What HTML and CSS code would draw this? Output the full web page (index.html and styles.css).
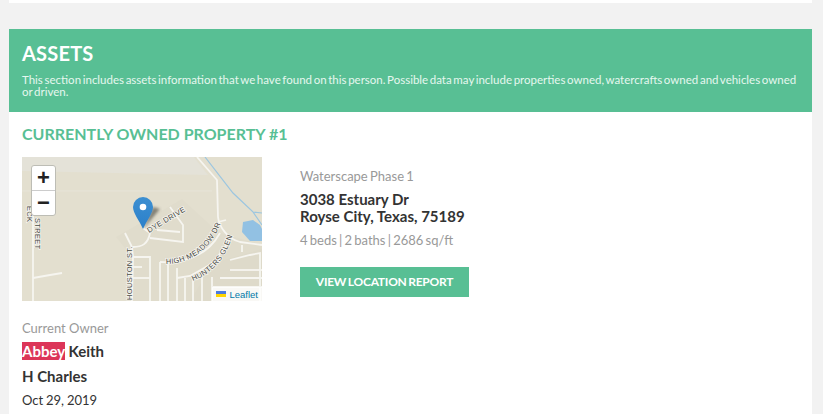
FILE: index.html
```html
<!DOCTYPE html>
<html lang="en">
<head>
  <meta charset="UTF-8">
  <meta name="viewport" content="width=device-width, initial-scale=1.0">
  <title>Assets</title>
  <link rel="stylesheet" href="styles.css">
</head>
<body>
  <div class="top-card"></div>

  <section class="assets">
    <header class="assets-header">
      <h2>ASSETS</h2>
      <p>This section includes assets information that we have found on this person. Possible data may include properties owned, watercrafts owned and vehicles owned or driven.</p>
    </header>

    <div class="assets-body">
      <h3>CURRENTLY OWNED PROPERTY #1</h3>

      <div class="property">
        <div class="map">
          <svg class="map-tiles" viewBox="0 0 240 144" width="240" height="144">
            <defs>
              <filter id="pin-blur"><feGaussianBlur stdDeviation="1.4"/></filter>
              <linearGradient id="pin-fill" x1="0" y1="0" x2="0" y2="1">
                <stop offset="0" stop-color="#3d8fd1"/>
                <stop offset="1" stop-color="#2a7fca"/>
              </linearGradient>
              <path id="meadow-path" d="M144 107C162 107 186 98 198 68"/>
              <path id="hunters-path" d="M171 124C186 118 202 106 210 80"/>
            </defs>
            <rect width="240" height="144" fill="#e3dfcf"/>
            <path d="M0 0H172L186 18L0 14Z" fill="#e4e2d8"/>
            <path d="M94 80L160 42L196 75L240 88V144H110V100Z" fill="#e0dccc"/>
            <path d="M191 106L240 92V144H168Z" fill="#dedaca"/>
            <path d="M0 34H190" stroke="#e7e4d8" stroke-width="1"/>
            <!-- creek and pond -->
            <path d="M183 0L211 36L231 55L240 56M231 55L240 68" fill="none" stroke="#9cc6e0" stroke-width="1.200"/>
            <path d="M221 65L231 63L238 68L240 72V84L228 84L220 75Z" fill="#92c1e3"/>
            <!-- main roads -->
            <g fill="none" stroke="#f6f5f0" stroke-width="1.800">
              <path d="M175 0L195 23L196 60C197 70 206 82 218 85L240 88"/>
              <path d="M196 65L204 63"/>
              <path d="M11 50V144"/>
              <path d="M11 121L28 118L40 116"/>
              <path d="M103 76L110 90L111 100L110 144"/>
              <path d="M111 90C120 90 126 87 128 76L121 71"/>
              <path d="M128 81L161 85V68L148 50"/>
              <path d="M135 73L158 75"/>
              <path d="M111 100H128V144"/>
              <path d="M111 110H120"/>
              <path d="M111 121H128"/>
              <path d="M138 105V144"/>
              <path d="M138 105C165 106 186 98 198 76"/>
              <path d="M146 106V144"/>
              <path d="M155 111V144"/>
              <path d="M163 121V144"/>
              <path d="M171 122V144"/>
              <path d="M180 120V144"/>
              <path d="M155 121L168 119L191 106L208 83"/>
              <path d="M190 120V144"/>
              <path d="M198 121H240"/>
              <path d="M208 113H240"/>
              <path d="M191 130H240"/>
              <path d="M220 88V95"/>
              <path d="M208 103L228 98L238 96V144"/>
            </g>
            <g class="map-labels">
              <text transform="translate(13 61) rotate(90)">STREET</text>
              <text transform="translate(5 49) rotate(90)">ECK</text>
              <text transform="translate(110 151) rotate(-90)">N HOUSTON ST.</text>
              <text transform="translate(127 76) rotate(-31)">DYE DRIVE</text>
              <text><textPath href="#meadow-path">HIGH MEADOW DR.</textPath></text>
              <text><textPath href="#hunters-path">HUNTERS GLEN</textPath></text>
            </g>
            <!-- marker shadow, then pin -->
            <path d="M121 72L131 50L138 52Z" fill="#3f3f38" opacity="0.6" filter="url(#pin-blur)"/>
            <path d="M121 72C117 63 111 56 111 50A10 10 0 0 1 131 50C131 56 125 63 121 72Z" fill="url(#pin-fill)"/>
            <circle cx="121" cy="50" r="3.300" fill="#fff"/>
          </svg>

          <div class="zoom-control">
            <a class="zoom-button">+</a>
            <a class="zoom-button">&minus;</a>
          </div>

          <div class="attribution">
            <svg class="flag" viewBox="0 0 10 6" width="10" height="6"><rect width="10" height="3" fill="#4c7be1"/><rect y="3" width="10" height="3" fill="#ffd500"/></svg>
            <a>Leaflet</a>
          </div>
        </div>

        <div class="property-info">
          <div class="subdivision">Waterscape Phase 1</div>
          <div class="address">3038 Estuary Dr<br>Royse City, Texas, 75189</div>
          <div class="details">4 beds | 2 baths | 2686 sq/ft</div>
          <a class="report-button">VIEW LOCATION REPORT</a>
        </div>
      </div>

      <div class="owner">
        <div class="owner-label">Current Owner</div>
        <div class="owner-name"><mark>Abbey</mark> Keith</div>
        <div class="owner-name">H Charles</div>
        <div class="owner-date">Oct 29, 2019</div>
      </div>
    </div>
  </section>
</body>
</html>
```

FILE: styles.css
```css
html, body {
  height: 414px;
  overflow: hidden;
}

body {
  font-family: Lato, 'Open Sans', sans-serif;
  margin: 0;
  padding: 0 11px 0 9px;
  background-color: #f2f2f2;
  color: #333;
}

.top-card {
  height: 3px;
  background-color: white;
}

.assets {
  margin-top: 26px;
  background-color: white;
}

.assets-header {
  background-color: #58bf94;
  color: white;
  padding: 12px 13px 14px;
  height: 57px;
}

.assets-header h2 {
  margin: 0;
  font-size: 20px;
  line-height: 24px;
  font-weight: bold;
  letter-spacing: 0.2px;
}

.assets-header p {
  margin: 9px 0 0;
  font-size: 11.500px;
  line-height: 12px;
  word-spacing: -1.300px;
  color: #e6f7ef;
}

.assets-body {
  padding: 12px 13px 20px;
}

.assets-body h3 {
  margin: 0;
  font-size: 16px;
  line-height: 20px;
  font-weight: bold;
  color: #58bf94;
}

.property {
  display: flex;
  margin-top: 13px;
}

.map {
  position: relative;
  width: 240px;
  height: 144px;
  overflow: hidden;
  background-color: #e3dfcf;
}

.map-tiles {
  display: block;
}

.map-labels text {
  font-family: 'Liberation Sans', sans-serif;
  font-size: 7.500px;
  fill: #4a4a44;
  stroke: #f6f5f0;
  stroke-width: 1.500px;
  paint-order: stroke;
  letter-spacing: 0.300px;
}

.zoom-control {
  position: absolute;
  left: 9px;
  top: 8px;
  width: 23px;
  border: 1px solid #bdbdb5;
  border-radius: 3px;
  background-color: white;
}

.zoom-button {
  display: block;
  height: 24px;
  line-height: 24px;
  text-align: center;
  font-family: 'Liberation Sans', sans-serif;
  font-size: 22px;
  font-weight: bold;
  color: #222;
}

.zoom-button + .zoom-button {
  border-top: 1px solid #ccc;
}

.attribution {
  position: absolute;
  right: 0;
  bottom: 0;
  height: 14px;
  display: flex;
  align-items: center;
  gap: 3px;
  padding: 0 4px;
  background-color: rgba(255, 255, 255, 0.8);
  font-family: 'Liberation Sans', sans-serif;
  font-size: 9.500px;
  color: #0078a8;
}

.flag {
  display: block;
}

.property-info {
  margin-left: 38px;
  padding-top: 11px;
}

.subdivision {
  font-size: 13px;
  line-height: 17px;
  word-spacing: -1px;
  color: #999;
}

.address {
  margin-top: 6px;
  font-size: 15px;
  line-height: 17px;
  font-weight: bold;
  color: #333;
}

.details {
  margin-top: 7px;
  font-size: 13px;
  line-height: 17px;
  word-spacing: -1.100px;
  color: #999;
}

.report-button {
  display: block;
  width: 169px;
  height: 30px;
  margin-top: 18px;
  background-color: #58bf94;
  color: white;
  font-size: 12px;
  font-weight: bold;
  line-height: 30px;
  letter-spacing: -0.250px;
  word-spacing: -1px;
  text-align: center;
}

.owner {
  margin-top: 19px;
}

.owner-label {
  font-size: 13px;
  line-height: 17px;
  color: #999;
}

.owner-name {
  margin-top: 4px;
  font-size: 15px;
  line-height: 20px;
  font-weight: bold;
}

.owner-name + .owner-name {
  margin-top: 5px;
}

.owner-name mark {
  background-color: #dc3558;
  color: white;
}

.owner-date {
  margin-top: 6px;
  font-size: 13px;
  line-height: 17px;
  word-spacing: -0.500px;
}
```
